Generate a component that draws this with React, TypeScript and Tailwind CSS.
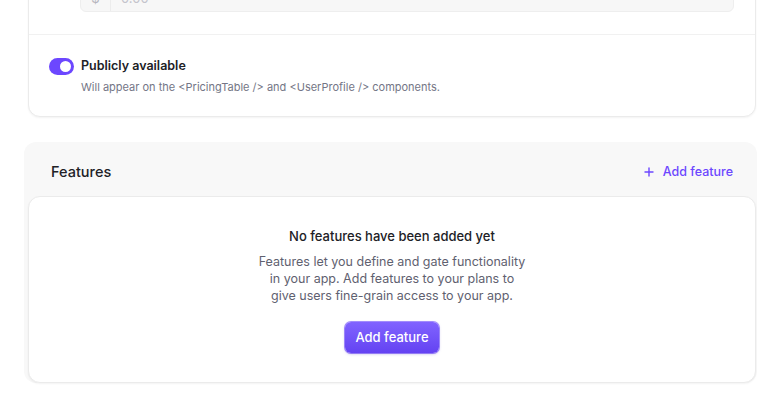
import React from "react";

export default function App() {
  return (
    <div className="min-h-screen overflow-hidden bg-white font-['Inter',sans-serif] antialiased">
      <div className="ml-[28px] w-[728px]">
        {/* Top card */}
        <div className="-mt-[30px] rounded-b-xl border border-[#ebebeb] bg-white shadow-[0_1px_2px_rgba(0,0,0,0.05)]">
          <div className="pl-[51px] pr-[21px] pt-[9px] pb-[22px]">
            <div className="flex h-[32px] items-stretch overflow-hidden rounded-md border border-[#eeeeee] bg-[#f7f7f7]">
              <div className="flex w-[30px] items-center justify-center border-r border-[#ececec] pt-[6px] text-[13px] text-[#b5b5bd]">
                $
              </div>
              <div className="flex items-center pl-[10px] pt-[6px] text-[13px] text-[#c4c4cc]">0.00</div>
            </div>
          </div>
          <div className="border-t border-[#f1f1f1] px-5 pt-[22px] pb-[21px]">
            <div className="flex h-[18px] items-center gap-[7px]">
              <div className="flex h-[17px] w-[25px] items-center justify-end rounded-full bg-[#6c47ff] px-[3px]">
                <div className="h-[11px] w-[11px] rounded-full bg-white" />
              </div>
              <span className="text-[12.5px] font-semibold leading-[18px] text-[#212126]">Publicly available</span>
            </div>
            <div className="mt-[4px] pl-[32px] text-[11px] leading-[16px] text-[#747686]">
              Will appear on the &lt;PricingTable /&gt; and &lt;UserProfile /&gt; components.
            </div>
          </div>
        </div>

        {/* Features */}
        <div className="mt-[25px] -ml-[4px] w-[733px] rounded-xl bg-[#f8f8f8]">
          <div className="flex h-[54px] items-center justify-between pt-[6px] pl-[27px] pr-[24px]">
            <span className="text-[14.5px] font-medium text-[#212126]">Features</span>
            <button className="flex items-center gap-[9px] text-[12.5px] font-medium text-[#6c47ff]">
              <svg width="10" height="10" viewBox="0 0 10 10" fill="none" stroke="currentColor" strokeWidth="1.4" strokeLinecap="round">
                <path d="M5 1v8M1 5h8" />
              </svg>
              Add feature
            </button>
          </div>
          <div className="ml-[4px] mr-[1px] flex flex-col items-center rounded-xl border border-[#ebebeb] bg-white pt-[30px] pb-[29px] shadow-[0_1px_2px_rgba(0,0,0,0.05)]">
            <div className="text-[13px] font-medium leading-[18px] text-[#212126]">No features have been added yet</div>
            <p className="mt-[8px] max-w-[270px] text-center text-[12.5px] leading-[17px] text-[#5f6170]">
              Features let you define and gate functionality in your app. Add features to your plans to give users fine-grain access to your app.
            </p>
            <button className="mt-[18px] flex h-[31px] w-[94px] items-center justify-center rounded-md bg-gradient-to-b from-[#8163ff] to-[#6442f2] text-[13px] font-medium text-white shadow-[0_1px_3px_rgba(76,48,200,0.35),0_0_0_1px_rgba(108,71,255,0.6)]">
              Add feature
            </button>
          </div>
        </div>
      </div>
    </div>
  );
}
